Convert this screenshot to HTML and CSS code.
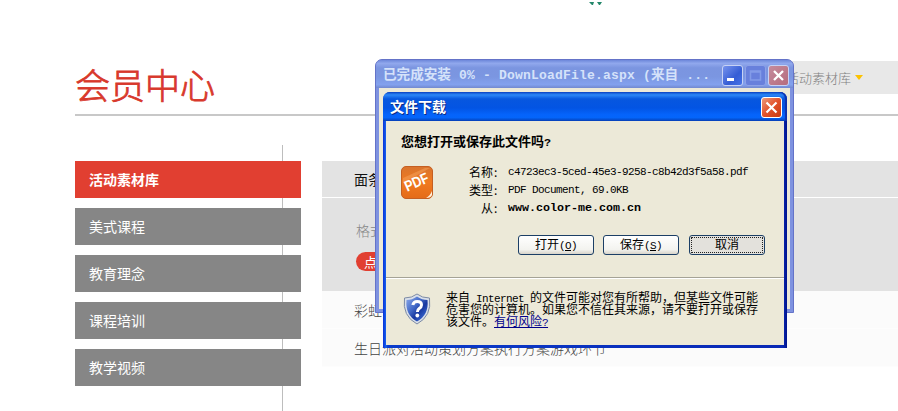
FILE: index.html
```html
<!DOCTYPE html>
<html lang="zh-CN">
<head>
<meta charset="utf-8">
<title>会员中心</title>
<link rel="stylesheet" href="styles.css">
</head>
<body>
<div class="page">
  <div class="top"><svg width="16" height="5" viewBox="0 0 16 5"><path d="M1 0h5l-1 3h-1zM9 0h5l-2 3h-1z" fill="#23876a"/></svg></div>
  <header class="heading">
    <h1>会员中心</h1>
    <div class="crumb">活动素材库<i class="arrow"></i></div>
  </header>
  <div class="columns">
    <nav class="menu">
      <a class="item active">活动素材库</a>
      <a class="item">美式课程</a>
      <a class="item">教育理念</a>
      <a class="item">课程培训</a>
      <a class="item">教学视频</a>
    </nav>
    <main class="list">
      <div class="row-head">面条</div>
      <div class="detail"><span class="format">格式</span><span class="pill">点击</span></div>
      <div class="row">彩虹</div>
      <div class="row last">生日派对活动策划方案执行方案游戏环节</div>
    </main>
  </div>
</div>

<section class="progress">
  <div class="bar">
    <span class="caption">已完成安装<span class="lat"> 0% - DownLoadFile.aspx (</span>来自<span class="lat"> ...</span></span>
    <span class="ctl min"><svg width="19" height="19" viewBox="0 0 19 19"><path d="M4 12h7v3H4z" fill="#fff"/></svg></span>
    <span class="ctl max"><svg width="19" height="19" viewBox="0 0 19 19"><path d="M4.500 5h10v9h-10zM4.500 6h10" fill="none" stroke="#839be8" stroke-width="1.500"/></svg></span>
    <span class="ctl shut"><svg width="19" height="19" viewBox="0 0 19 19"><path d="M5 5l9 9M14 5l-9 9" stroke="#fff" stroke-width="2.300"/></svg></span>
  </div>
  <div class="progress-body"></div>
</section>

<section class="dialog">
  <div class="dialog-bar">
    <span class="dialog-title">文件下载</span>
    <span class="close"><svg width="19" height="19" viewBox="0 0 19 19"><path d="M4.500 4.500l10 10M14.500 4.500l-10 10" stroke="#fff" stroke-width="2.200"/></svg></span>
  </div>
  <div class="dialog-body">
    <p class="ask">您想打开或保存此文件吗<span class="lat">?</span></p>
    <div class="info">
      <svg class="pdf" width="32" height="33" viewBox="0 0 32 33">
        <defs><linearGradient id="o" x1="0" y1="0" x2="0" y2="1"><stop offset="0" stop-color="#d9742e"/><stop offset=".5" stop-color="#f07a20"/><stop offset="1" stop-color="#e46b18"/></linearGradient></defs>
        <rect x=".5" y=".5" width="31" height="32" rx="4.500" fill="url(#o)" stroke="#c55f22"/>
        <path d="M2 12L24 2h5L2 17z" fill="#f5a35d" opacity=".5"/>
        <path d="M25 32q4-2 6-7v4q-1 3-6 3z" fill="#fff1dc"/>
        <text class="pdf-text" x="3.500" y="21" transform="rotate(-24 16 17)" textLength="25" lengthAdjust="spacingAndGlyphs">PDF</text>
      </svg>
      <dl>
        <dt>名称<i>:</i></dt><dd>c4723ec3-5ced-45e3-9258-c8b42d3f5a58.pdf</dd>
        <dt>类型<i>:</i></dt><dd>PDF Document, 69.0KB</dd>
        <dt>从<i>:</i></dt><dd class="host">www.color-me.com.cn</dd>
      </dl>
    </div>
    <div class="buttons">
      <button>打开<span class="key">(<u>O</u>)</span></button>
      <button>保存<span class="key">(<u>S</u>)</span></button>
      <button class="focus">取消</button>
    </div>
    <div class="warn">
      <svg class="shield" width="28" height="32" viewBox="0 0 28 32">
        <defs><linearGradient id="b" x1="0" y1="0" x2="1" y2="1"><stop offset="0" stop-color="#8facec"/><stop offset=".4" stop-color="#4168c6"/><stop offset=".6" stop-color="#1738a0"/><stop offset="1" stop-color="#4b80e8"/></linearGradient></defs>
        <path d="M14 1Q19 5 26.500 5Q29 23 14 31Q-1 23 1.500 5Q9 5 14 1z" fill="#d9dfe9" stroke="#7d8ba5"/>
        <path d="M14 3.500Q19 7 24.500 7Q26 22 14 28.500Q2 22 3.500 7Q9 7 14 3.500z" fill="url(#b)"/>
        <path d="M9.800 12Q10.500 8.500 14.200 8.500Q18.500 8.500 18.500 12Q18.500 14 16.200 15.500Q14.400 16.700 14.400 19" fill="none" stroke="#fff" stroke-width="3"/>
        <circle cx="14.300" cy="22.500" r="1.900" fill="#fff"/>
      </svg>
      <div class="note">
        <p>来自<span class="net"> Internet </span>的文件可能对您有所帮助，但某些文件可能</p>
        <p>危害您的计算机。如果您不信任其来源，请不要打开或保存</p>
        <p>该文件。<a>有何风险<span class="net">?</span></a></p>
      </div>
    </div>
  </div>
</section>
</body>
</html>
```
FILE: styles.css
```css
* { box-sizing: border-box; }
body {
  margin: 0;
  height: 411px;
  overflow: hidden;
  background: #fff;
  font-family: "Noto Sans CJK SC", sans-serif;
}
p, h1, dl, dd { margin: 0; }
i { font-style: normal; }

.page { padding-left: 75px; height: 411px; }
.top { height: 61px; padding-left: 513px; line-height: 0; }
.heading {
  display: flex;
  justify-content: space-between;
  height: 55px;
  border-bottom: 2px solid #c8c8c8;
}
h1 {
  font-size: 35px;
  line-height: 46px;
  font-weight: 300;
  color: #d8382b;
  -webkit-text-stroke: .8px #d8382b;
}
.crumb {
  display: flex;
  align-items: center;
  width: 398px;
  height: 33px;
  padding-left: 286px;
  background: #e8e8e8;
  color: #808080;
  font-size: 13px;
  font-weight: 300;
}
.arrow {
  margin-left: 4px;
  border: 4px solid transparent;
  border-top: 5px solid #fcc200;
  border-bottom: 0;
}
.columns { display: flex; gap: 21px; height: 295px; }
.menu {
  display: flex;
  flex-direction: column;
  gap: 10px;
  width: 226px;
  margin-top: 29px;
  padding-top: 16px;
  background: linear-gradient(#bdbdbd, #bdbdbd) 207px 0 / 1px 100% no-repeat;
}
.item {
  height: 37px;
  padding-left: 14px;
  background: #868686;
  color: #fff;
  font-size: 14px;
  line-height: 37px;
}
.active { background: #e13f31; font-weight: 700; }
.list { flex: 1; padding-top: 45px; font-size: 14px; color: #444; font-weight: 300; }
.row-head {
  height: 37px;
  padding-left: 32px;
  background: #e3e3e3;
  border-bottom: 1px solid #fff;
  line-height: 36px;
  color: #111;
  font-weight: 400;
}
.detail {
  display: flex;
  flex-direction: column;
  align-items: flex-start;
  height: 93px;
  padding: 21px 0 0 34px;
  background: #e2e2e2;
}
.format { line-height: 22px; color: #888; }
.pill {
  height: 19px;
  margin-top: 11px;
  padding: 0 8px;
  border-radius: 10px;
  background: #e13f31;
  color: #fff;
  font-size: 13px;
  line-height: 19px;
  font-weight: 400;
}
.row {
  height: 38px;
  padding-left: 32px;
  background: #fbfbfb;
  border-bottom: 1px solid #fdfdfd;
  line-height: 39px;
}
.last { line-height: 38px; }

.progress {
  position: absolute;
  left: 375px;
  top: 59px;
  width: 419px;
  height: 254px;
  padding: 0 3px 3px;
  border: 1px solid #6473c8;
  border-radius: 7px 7px 0 0;
  background: #7e92e0;
}
.bar {
  display: flex;
  align-items: center;
  height: 28px;
  margin: 0 -3px;
  padding: 2px 4px 0 7px;
  border-radius: 6px 6px 0 0;
  background: linear-gradient(#6d87da, #91a8ed 12%, #7b95e0 28%, #7b96e1 60%, #83a1ee 88%, #7288cf);
}
.caption {
  flex: 1;
  margin-top: -2px;
  white-space: pre;
  color: #d5e2fa;
  font-size: 13.600px;
  line-height: 20px;
  font-weight: 700;
}
.lat { font-family: "Liberation Mono", monospace; font-size: 13px; }
.caption .lat { letter-spacing: .2px; }
.ctl {
  width: 21px;
  height: 21px;
  margin-left: 2px;
  border: 1px solid #c7d2f5;
  border-radius: 3px;
  line-height: 0;
}
.min { background: linear-gradient(135deg, #7793ed, #355dd5 60%, #4773e7); }
.max { background: #6880dc; border-color: #8ea2e8; }
.shut { background: linear-gradient(135deg, #c58b9d, #b66c7d); }
.progress-body { height: 221px; background: #ece9d8; }

.dialog {
  position: absolute;
  left: 383px;
  top: 92px;
  width: 404px;
  height: 256px;
  padding: 0 3px 3px;
  border-radius: 7px 7px 0 0;
  background: linear-gradient(90deg, #0831d9, #1662ed 3px, #0b3ccb 5px, #0828b4 99%, #00138c);
}
.dialog-bar {
  display: flex;
  align-items: center;
  justify-content: space-between;
  height: 29px;
  margin: 0 -3px;
  padding: 2px 5px 0 7px;
  border-radius: 7px 7px 0 0;
  background: linear-gradient(#0a44c4, #2b87f7 10%, #0757df 24%, #0354e3 55%, #0564fb 78%, #0465fa 88%, #0642b9);
  box-shadow: inset -2px 0 1px #0a2fae;
}
.dialog-title {
  margin-top: -3px;
  color: #fff;
  font-size: 14px;
  line-height: 20px;
  font-weight: 700;
  text-shadow: 1px 1px #0a2a84;
}
.close {
  width: 21px;
  height: 21px;
  border: 1px solid #fff;
  border-radius: 3px;
  background: linear-gradient(135deg, #ed9a7c, #e2522b 50%, #c93a10);
  line-height: 0;
}
.dialog-body { height: 224px; padding: 10px 0 0; background: #ece9d8; color: #000; font-size: 12px; }
.ask { padding-left: 15px; font-size: 13px; line-height: 20px; font-weight: 700; }
.ask .lat { font-size: 11.700px; }
.info { display: flex; gap: 34px; padding: 10px 0 0 15px; }
.pdf { margin-top: 3px; }
.pdf-text { font: 700 15px "Liberation Sans", sans-serif; fill: #fff; }
dl { display: grid; grid-template-columns: 41px auto; grid-auto-rows: 18px; line-height: 18px; }
dt { display: flex; justify-content: flex-end; padding-right: 9px; white-space: nowrap; }
dt i { width: 6px; padding-left: 1px; }
dd {
  padding-top: 1px;
  font-family: "Liberation Mono", monospace;
  font-size: 11px;
  letter-spacing: -.6px;
  line-height: 17px;
  white-space: nowrap;
}
.host { font-size: 11.670px; letter-spacing: 0; font-weight: 700; }
.buttons { display: flex; gap: 9px; padding: 18px 0 0 132px; }
button {
  width: 76px;
  height: 20px;
  padding: 0 0 2px;
  border: 1px solid #1c3f66;
  border-radius: 3px;
  background: linear-gradient(#fff, #f3f3ef 75%, #d8d4ca);
  color: #000;
  font: 12px/16px "Noto Sans CJK SC", sans-serif;
}
.key { font-family: "Liberation Mono", monospace; font-size: 11px; letter-spacing: -.6px; }
.focus { margin-left: 1px; background: #e3e1dc; outline: 1px dotted #222; outline-offset: -3px; }
.warn {
  display: flex;
  gap: 15px;
  height: 70px;
  margin-top: 22px;
  padding: 15px 0 0 17px;
  border-top: 1px solid #a5a396;
  box-shadow: inset 0 1px #fff;
}
.note { margin-top: -2px; }
.note p { height: 12px; font-size: 12px; line-height: 12px; white-space: pre; }
.net {
  font-family: "Liberation Mono", monospace;
  font-size: 11px;
  letter-spacing: -.6px;
  line-height: 1;
}
.warn a { color: #00008b; text-decoration: underline; }
```
